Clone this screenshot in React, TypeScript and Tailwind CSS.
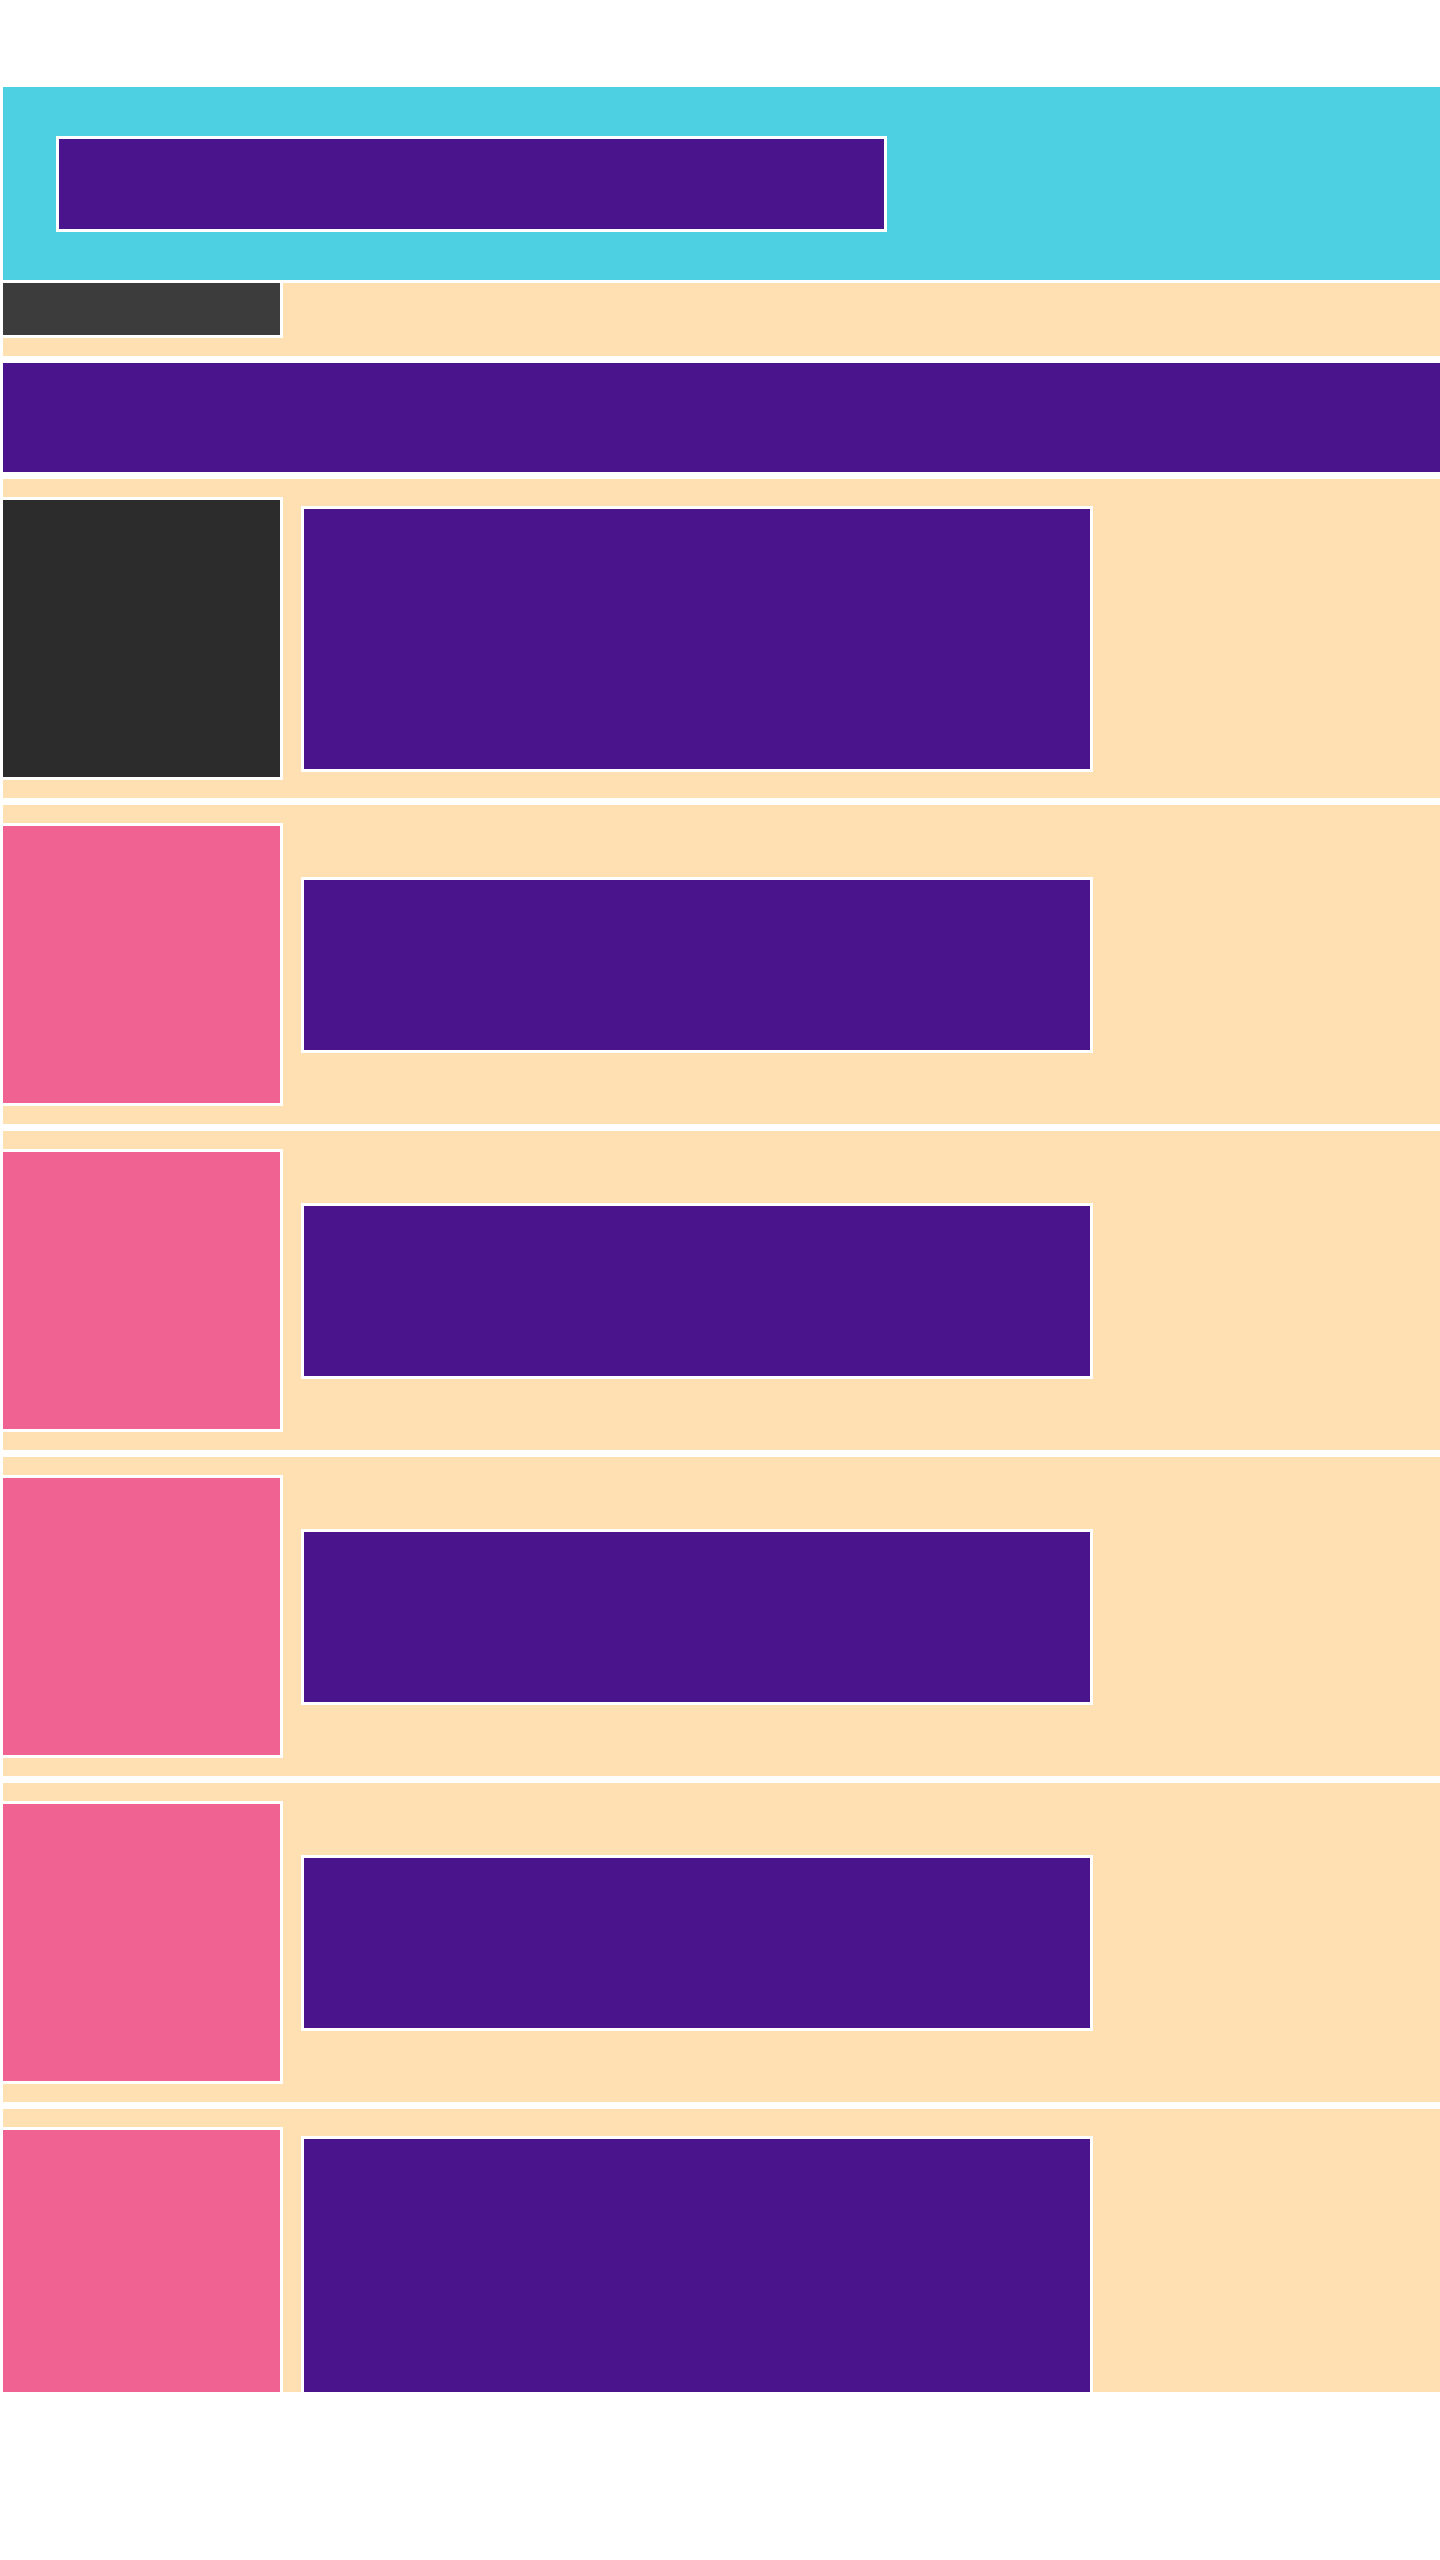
const rows = [
  { tone: 'dark', tall: true },
  { tone: 'pink', tall: false },
  { tone: 'pink', tall: false },
  { tone: 'pink', tall: false },
  { tone: 'pink', tall: false },
  { tone: 'pink', tall: true },
];

function Row({ tone, tall }: { tone: string; tall: boolean }) {
  return (
    <div className="flex h-[319px] shrink-0 items-center bg-[#ffe0b2]">
      {/* thumbnail */}
      <div
        className={
          tone === 'dark'
            ? '-ml-[3px] mt-[18px] h-[283px] w-[283px] shrink-0 self-start border-[3px] border-white bg-[#2c2c2c]'
            : '-ml-[3px] mt-[18px] h-[283px] w-[283px] shrink-0 self-start border-[3px] border-white bg-[#f06292]'
        }
      />
      <div
        className={
          tall
            ? 'ml-[18px] h-[266px] w-[792px] shrink-0 border-[3px] border-white bg-[#4a148c]'
            : 'ml-[18px] h-[176px] w-[792px] shrink-0 border-[3px] border-white bg-[#4a148c]'
        }
      />
    </div>
  );
}

export default function App() {
  return (
    <div className="min-h-screen bg-white">
      <div className="flex h-[2392px] flex-col overflow-hidden pl-[3px] pt-[87px]">
        {/* header */}
        <header className="flex h-[193px] shrink-0 items-center bg-[#4dd0e1] pl-[53px]">
          <div className="h-[96px] w-[831px] border-[3px] border-white bg-[#4a148c]" />
        </header>

        {/* toolbar */}
        <div className="mt-[3px] flex h-[73px] shrink-0 items-start bg-[#ffe0b2]">
          <div className="-ml-[3px] -mt-[3px] h-[58px] w-[283px] shrink-0 border-[3px] border-white bg-[#3c3c3c]" />
        </div>

        {/* banner */}
        <div className="mt-[7px] h-[109px] shrink-0 bg-[#4a148c]" />

        <div className="mt-[7px] flex flex-col gap-[7px]">
          {rows.map((r, i) => (
            <Row key={i} tone={r.tone} tall={r.tall} />
          ))}
        </div>
      </div>
    </div>
  );
}
